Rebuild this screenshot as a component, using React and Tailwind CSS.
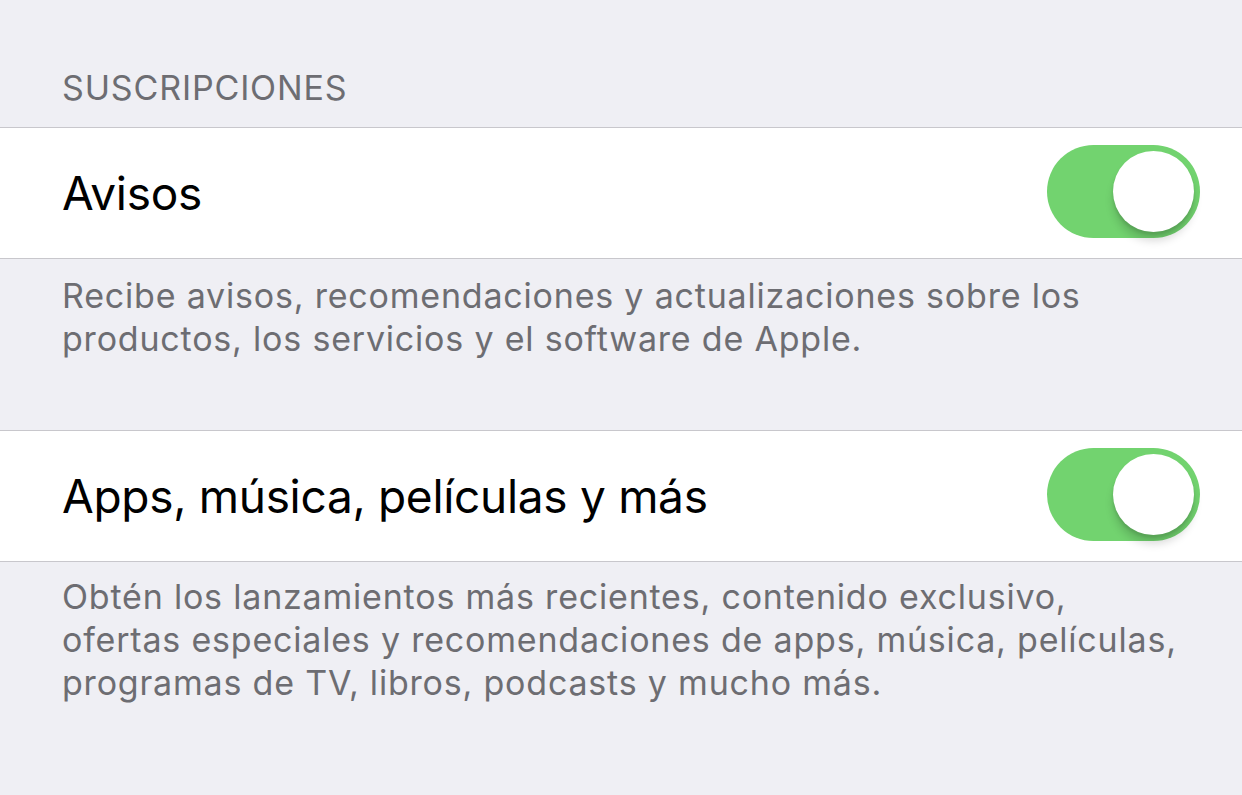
import { useState } from "react";

// iOS-style settings group: section header, toggle rows, footers
function Toggle({ on, onChange }) {
  return (
    <button
      onClick={() => onChange(!on)}
      className={`relative w-[153px] h-[93px] mb-[4px] rounded-full shrink-0 ${on ? "bg-[#72d36f]" : "bg-[#e5e5ea]"}`}
    >
      <span
        className={`absolute top-[6px] w-[81px] h-[81px] rounded-full bg-white shadow-[0_9px_9px_rgba(0,0,0,0.15),0_3px_3px_rgba(0,0,0,0.1)] ${on ? "left-[66px]" : "left-[6px]"}`}
      />
    </button>
  );
}

function Row({ label, on, onChange }) {
  return (
    <div className="bg-white border-y border-[#c8c7cc] h-[132px] flex items-center justify-between pl-[62px] pr-[42px]">
      <span className="text-[46px] text-black tracking-[-0.3px]">{label}</span>
      <Toggle on={on} onChange={onChange} />
    </div>
  );
}

function Footer({ className, children }) {
  return (
    <p className={`px-[62px] text-[34px] leading-[43px] tracking-[0.8px] text-[#6d6d72] ${className}`}>
      {children}
    </p>
  );
}

export default function App() {
  const [avisos, setAvisos] = useState(true);
  const [apps, setApps] = useState(true);

  return (
    <div
      className="min-h-screen bg-[#efeff4] overflow-hidden"
      style={{ fontFamily: "Inter, 'Noto Sans', sans-serif" }}
    >
      <div className="pt-[68px] pb-[19px] px-[62px] text-[34px] leading-[40px] tracking-[0.85px] text-[#6d6d72] uppercase">
        Suscripciones
      </div>
      <Row label="Avisos" on={avisos} onChange={setAvisos} />
      <div className="h-[171px]">
        <Footer className="pt-[15px]">
          Recibe avisos, recomendaciones y actualizaciones sobre los productos, los servicios y el software de Apple.
        </Footer>
      </div>
      <Row label="Apps, música, películas y más" on={apps} onChange={setApps} />
      <Footer className="pt-[13px]">
        Obtén los lanzamientos más recientes, contenido exclusivo, ofertas especiales y recomendaciones de apps, música, películas, programas de TV, libros, podcasts y mucho más.
      </Footer>
    </div>
  );
}
